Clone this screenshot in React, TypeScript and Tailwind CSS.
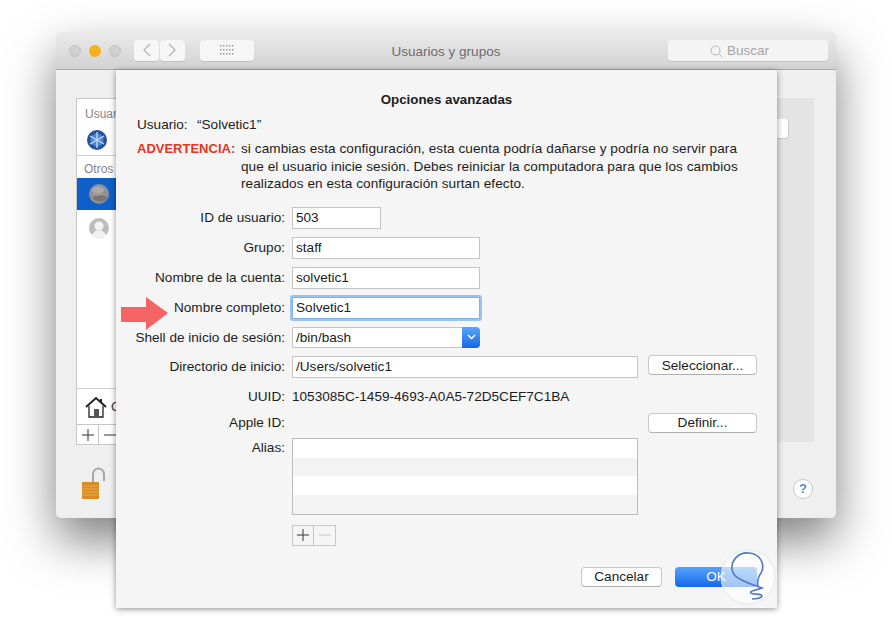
import React from 'react';

const font = { fontFamily: '"Liberation Sans", Arial, sans-serif' };

const Field = ({ w, value, focus }: { w: string; value: string; focus?: boolean }) => (
  <div className={`${w} h-[22px] flex items-center pl-[3px] pt-[1px] bg-white text-[13.6px] text-[#1c1c1c] ${focus ? 'border border-[#7fb0ea] shadow-[0_0_0_2px_#9cc3f0] rounded-[1px]' : 'border border-[#c4c4c4]'}`}>
    {value}
  </div>
);

const Row = ({ label, className, children }: { label: string; className?: string; children?: React.ReactNode }) => (
  <div className={`flex items-center ${className ?? ''}`}>
    <div className="w-[169px] pt-[1px] text-right text-[13.6px] text-[#1c1c1c] whitespace-nowrap">{label}</div>
    <div className="ml-[7px] flex items-center">{children}</div>
  </div>
);

const SheetButton = ({ label, className }: { label: string; className?: string }) => (
  <div className={`h-[20px] pt-[1px] flex items-center justify-center bg-white rounded-[4px] border border-[#c8c8c8] border-b-[#b0b0b0] text-[13.6px] text-[#1c1c1c] ${className ?? ''}`}>
    {label}
  </div>
);

const PlusMinus = ({ minusOff }: { minusOff?: boolean }) => (
  <>
    <div className="w-[22px] h-full flex items-center justify-center border-r border-[#c4c4c4]">
      <svg width="12" height="12" viewBox="0 0 12 12"><path d="M6 0v12M0 6h12" stroke="#333" strokeWidth="1" /></svg>
    </div>
    <div className="w-[22px] h-full flex items-center justify-center">
      <svg width="12" height="12" viewBox="0 0 12 12"><path d="M0 6h12" stroke={minusOff ? '#c8c8c8' : '#333'} strokeWidth="1" /></svg>
    </div>
  </>
);

const Snowflake = () => (
  <svg width="20" height="20" viewBox="0 0 20 20">
    <circle cx="10" cy="10" r="10" fill="#23539f" />
    <circle cx="10" cy="10" r="6.5" fill="#5088cf" />
    <path d="M10 2v16M3 6l14 8M3 14l14-8" stroke="#c4d9f2" strokeWidth="1.300" />
  </svg>
);

const Avatar = ({ photo }: { photo?: boolean }) =>
  photo ? (
    <svg width="20" height="20" viewBox="0 0 20 20">
      <circle cx="10" cy="10" r="10" fill="#8d9095" />
      <ellipse cx="9" cy="6" rx="6" ry="3.500" fill="#a9aaac" />
      <ellipse cx="11" cy="14" rx="7" ry="3.500" fill="#77777a" />
      <path d="M4 11c2-2 3 1 5 0s3-2 7 0" stroke="#b59a8c" strokeWidth="1.500" fill="none" />
    </svg>
  ) : (
    <svg width="20" height="20" viewBox="0 0 20 20">
      <circle cx="10" cy="10" r="10" fill="#bcbcbc" />
      <circle cx="10" cy="8" r="4.500" fill="#f2f2f2" />
      <path d="M3 17c2-4 4-4.500 7-4.500s5 .5 7 4.500a10 10 0 0 1-14 0z" fill="#f2f2f2" />
    </svg>
  );

export default function App() {
  return (
    <div className="relative w-[892px] h-[629px] bg-white overflow-hidden" style={font}>
      {/* Back window */}
      <div className="absolute left-[56px] top-[32px] w-[780px] h-[486px] flex flex-col bg-[#efefef] rounded-[5px] shadow-[0_22px_48px_rgba(0,0,0,0.5)] overflow-hidden">
        <div className="h-[38px] shrink-0 flex items-center pl-[13px] pr-[8px] bg-gradient-to-b from-[#ebebeb] to-[#d2d2d2] border-b border-[#a9a9a9]">
          <div className="w-[12px] h-[12px] rounded-full bg-[#cfcfcf] border border-[#c4c4c4]" />
          <div className="ml-[8px] w-[12px] h-[12px] rounded-full bg-[#f7b01e]" />
          <div className="ml-[8px] w-[12px] h-[12px] rounded-full bg-[#cfcfcf] border border-[#c4c4c4]" />
          <div className="ml-[13px] flex gap-[1px]">
            <div className="w-[25px] h-[22px] bg-[#f6f6f6] rounded-[4px] border-b border-[#c0c0c0] flex items-center justify-center">
              <svg width="9" height="14" viewBox="0 0 9 14"><path d="M8 1L2 7l6 6" stroke="#b4b4b4" strokeWidth="1.300" fill="none" /></svg>
            </div>
            <div className="w-[25px] h-[22px] bg-[#f6f6f6] rounded-[4px] border-b border-[#c0c0c0] flex items-center justify-center">
              <svg width="9" height="14" viewBox="0 0 9 14"><path d="M1 1l6 6-6 6" stroke="#b4b4b4" strokeWidth="1.300" fill="none" /></svg>
            </div>
          </div>
          <div className="ml-[15px] w-[54px] h-[22px] bg-[#f6f6f6] rounded-[4px] border-b border-[#c0c0c0] flex items-center justify-center">
            <svg width="15" height="11" viewBox="0 0 15 11" fill="#9a9a9a">
              {[0, 1, 2].map((r) =>
                [0, 1, 2, 3, 4].map((c) => <rect key={`${r}-${c}`} x={c * 3} y={r * 4} width="1.500" height="1.500" />)
              )}
            </svg>
          </div>
          <div className="flex-1 pr-[30px] pt-[3px] text-center text-[13.5px] text-[#6d6d6d]">Usuarios y grupos</div>
          <div className="w-[160px] h-[22px] pr-[17px] pt-[3px] bg-[#f4f4f4] rounded-[4px] border-b border-[#c4c4c4] flex items-center justify-center gap-[4px] text-[13.5px] text-[#a4a4a4]">
            <svg width="13" height="13" viewBox="0 0 13 13" fill="none" stroke="#b4b4b4" strokeWidth="1"><circle cx="5.500" cy="5.500" r="4.500" /><path d="M9 9l3.500 3.500" /></svg>
            Buscar
          </div>
        </div>

        <div className="flex-1 flex pl-[20px] pr-[22px] pt-[28px]">
          <div className="flex flex-col">
            <div className="w-[110px] h-[347px] flex flex-col bg-white border border-[#c6c6c6]">
              <div className="h-[57px] border-b border-[#d0d0d0] pl-[8px] pt-[6px] text-[12px] text-[#858585]">
                Usuarios
                <div className="mt-[7px] ml-[2px]"><Snowflake /></div>
              </div>
              <div className="h-[22px] pl-[7px] pt-[3px] flex items-center text-[12px] text-[#858585]">Otros</div>
              <div className="h-[32px] pl-[12px] flex items-center bg-[#0f5fc9]"><Avatar photo /></div>
              <div className="h-[36px] pl-[12px] flex items-center"><Avatar /></div>
              <div className="flex-1" />
              <div className="h-[36px] pl-[8px] flex items-center border-t border-[#d0d0d0] bg-white">
                <svg width="22" height="22" viewBox="0 0 22 22" fill="none" stroke="#222">
                  <path d="M1 11L11 2l10 9" strokeWidth="2" />
                  <path d="M16 3v4" strokeWidth="2" />
                  <path d="M4 10v11h14V10" strokeWidth="1.300" />
                  <rect x="9" y="13" width="5" height="8" fill="#555" stroke="none" />
                </svg>
                <span className="ml-[4px] text-[13px] text-[#333]">Opciones</span>
              </div>
              <div className="h-[20px] flex border-t border-[#c6c6c6]"><PlusMinus /></div>
            </div>
            <div className="mt-[22px] ml-[5px]">
              <svg width="24" height="32" viewBox="0 0 24 32">
                <path d="M12 15V7a5.500 5.500 0 0 1 11 0v7" fill="none" stroke="#a8a8a8" strokeWidth="2" />
                <rect x="1" y="15" width="17" height="17" rx="1" fill="#d98a24" />
                <path d="M1 19h17M1 22h17M1 25h17M1 28h17" stroke="#eeb35c" strokeWidth="0.800" />
              </svg>
            </div>
          </div>
          <div className="flex-1 flex flex-col">
            <div className="ml-auto w-[40px] h-[344px] bg-[#e4e4e4] pt-[21px]">
              <div className="w-[14px] h-[20px] bg-white rounded-r-[3px] border-r border-b border-[#c8c8c8] ml-[1px]" />
            </div>
            <div className="mt-[37px] ml-auto mr-[1px] w-[20px] h-[20px] rounded-full bg-white border border-[#c8c8c8] flex items-center justify-center text-[13px] font-bold text-[#4a8fd6]">
              ?
            </div>
          </div>
        </div>
      </div>

      {/* Sheet */}
      <div className="absolute left-[116px] top-[70px] w-[661px] h-[538px] bg-[#f5f5f5] shadow-[0_1px_6px_rgba(0,0,0,0.45)] text-[13.6px] text-[#1c1c1c]">
        <div className="pt-[22px] h-[37px] leading-[16px] text-center text-[13.3px] font-bold">Opciones avanzadas</div>
        <div className="mt-[10px] pl-[21px] h-[16px] leading-[16px] flex">
          <span className="w-[60px]">Usuario:</span>
          <span>“Solvetic1”</span>
        </div>
        <div className="mt-[7px] pl-[21px] flex leading-[17.5px]">
          <span className="w-[104px] text-[13px] font-bold text-[#e8341c] whitespace-nowrap">ADVERTENCIA:</span>
          <p className="w-[500px] tracking-[0.06px]">
            si cambias esta configuración, esta cuenta podría dañarse y podría no servir para que el usuario inicie sesión. Debes reiniciar la computadora para que los cambios realizados en esta configuración surtan efecto.
          </p>
        </div>

        <Row label="ID de usuario:" className="mt-[14px]"><Field w="w-[89px]" value="503" /></Row>
        <Row label="Grupo:" className="mt-[8px]"><Field w="w-[188px]" value="staff" /></Row>
        <Row label="Nombre de la cuenta:" className="mt-[8px]"><Field w="w-[188px]" value="solvetic1" /></Row>
        <Row label="Nombre completo:" className="mt-[8px]"><Field w="w-[188px]" value="Solvetic1" focus /></Row>
        <Row label="Shell de inicio de sesión:" className="mt-[8px]">
          <div className="w-[188px] h-[21px] flex items-center justify-between bg-white border border-[#c4c4c4] rounded-r-[4px] pl-[3px] pt-[1px]">
            /bin/bash
            <div className="w-[18px] h-[21px] -mr-px -mt-[1px] rounded-r-[4px] bg-gradient-to-b from-[#5aa5f8] to-[#1367e6] flex items-center justify-center">
              <svg width="9" height="6" viewBox="0 0 9 6"><path d="M1 1l3.500 3.500L8 1" stroke="#fff" strokeWidth="1.500" fill="none" /></svg>
            </div>
          </div>
        </Row>
        <Row label="Directorio de inicio:" className="mt-[8px]">
          <Field w="w-[346px]" value="/Users/solvetic1" />
          <SheetButton label="Seleccionar..." className="ml-[10px] w-[109px] -mt-[3px]" />
        </Row>
        <Row label="UUID:" className="mt-[10px] h-[18px]">1053085C-1459-4693-A0A5-72D5CEF7C1BA</Row>
        <Row label="Apple ID:" className="mt-[7px] h-[20px]">
          <SheetButton label="Definir..." className="ml-[356px] w-[109px]" />
        </Row>

        <div className="mt-[5px] flex items-start">
          <div className="w-[169px] pt-[1px] text-right leading-[18px]">Alias:</div>
          <div className="ml-[7px] w-[346px] h-[77px] flex flex-col border border-[#bcbcbc] bg-white">
            <div className="flex-1 bg-white" />
            <div className="flex-1 bg-[#f3f3f3]" />
            <div className="flex-1 bg-white" />
            <div className="flex-1 bg-[#f3f3f3]" />
          </div>
        </div>
        <div className="mt-[10px] ml-[176px] w-[44px] h-[21px] flex border border-[#c8c8c8]"><PlusMinus minusOff /></div>

        <div className="mt-[21px] flex pl-[465px]">
          <SheetButton label="Cancelar" className="w-[81px]" />
          <div className="ml-[13px] w-[82px] h-[20px] rounded-[4px] bg-gradient-to-b from-[#56a2fa] to-[#1268ea] text-white flex items-center justify-center">OK</div>
        </div>
      </div>

      {/* Arrow annotation */}
      <svg className="absolute left-[121px] top-[297px]" width="47" height="33" viewBox="0 0 47 33">
        <path d="M0 10h25V0l22 16-22 17V25H0z" fill="#f56464" />
      </svg>

      {/* Watermark */}
      <svg className="absolute left-[720px] top-[549px]" width="56" height="56" viewBox="0 0 56 56">
        <circle cx="28" cy="28" r="27" fill="#ffffff" fillOpacity="0.6" stroke="#e4e8f2" strokeWidth="1" />
        <path d="M38 38C37 32 38 28 41 24C45 17 42 5 29 4C18 3 11 12 12 20C13 28 20 30 26 33C30 35 34 36 42 39C36 41 29 42 31 44C33 46 42 44 42 47C42 49 36 50 32 50" fill="none" stroke="#5079bd" strokeWidth="1.600" />
      </svg>
    </div>
  );
}
